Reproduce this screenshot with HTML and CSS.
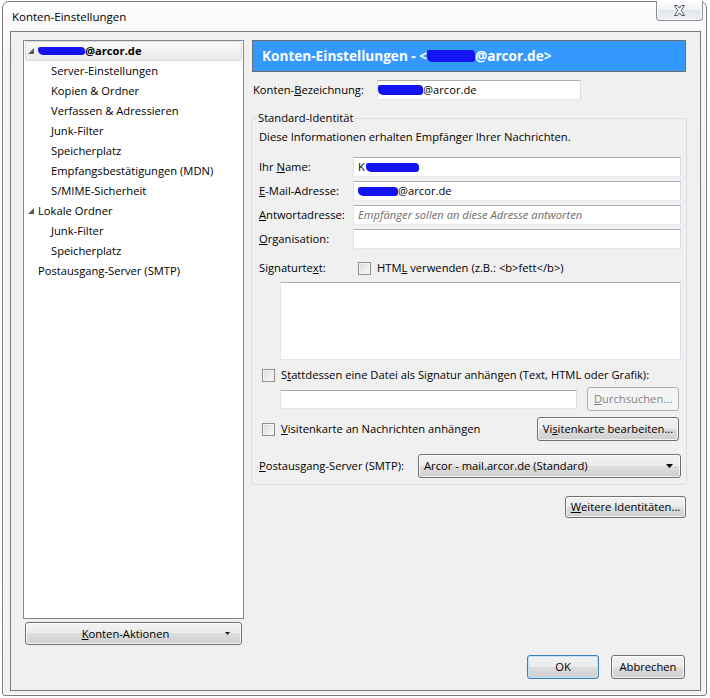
FILE: index.html
```html
<!DOCTYPE html>
<html lang="de">
<head>
    <meta charset="UTF-8">
    <meta name="viewport" content="width=device-width, initial-scale=1.0">
    <title>Konten-Einstellungen</title>
    <link rel="stylesheet" href="styles.css">
</head>
<body>
    <div class="window">
        <div class="titlebar">
            <span class="title">Konten-Einstellungen</span>
            <button class="close" type="button" aria-label="Schließen">
                <svg width="13" height="11" viewBox="0 0 13 11">
                    <polygon points="1.5,0.5 4.5,0.5 6.5,3.2 8.5,0.5 11.5,0.5 8.2,5.5 11.5,10.5 8.5,10.5 6.5,7.8 4.5,10.5 1.5,10.5 4.8,5.5" fill="#fff" stroke="#4d5566" stroke-width="1"/>
                </svg>
            </button>
        </div>

        <div class="client">
            <div class="main">
                <!-- Kontenbaum links -->
                <div class="sidebar">
                    <ul class="tree">
                        <li class="top sel">
                            <svg class="twisty" viewBox="0 0 7 7"><polygon points="6,0 6,6 0,6" fill="#595959"/></svg>
                            <b><span class="redact r-tree"></span>@arcor.de</b>
                        </li>
                        <li class="leaf">Server-Einstellungen</li>
                        <li class="leaf">Kopien &amp; Ordner</li>
                        <li class="leaf">Verfassen &amp; Adressieren</li>
                        <li class="leaf">Junk-Filter</li>
                        <li class="leaf">Speicherplatz</li>
                        <li class="leaf">Empfangsbestätigungen (MDN)</li>
                        <li class="leaf">S/MIME-Sicherheit</li>
                        <li class="top">
                            <svg class="twisty" viewBox="0 0 7 7"><polygon points="6,0 6,6 0,6" fill="#595959"/></svg>
                            Lokale Ordner
                        </li>
                        <li class="leaf">Junk-Filter</li>
                        <li class="leaf">Speicherplatz</li>
                        <li class="plain">Postausgang-Server (SMTP)</li>
                    </ul>
                    <button class="btn actions" type="button">
                        <span class="btn-text"><u>K</u>onten-Aktionen</span>
                        <svg class="mini-arrow" width="5" height="3" viewBox="0 0 5 3"><polygon points="0,0 5,0 2.5,3" fill="#222"/></svg>
                    </button>
                </div>

                <!-- Einstellungen rechts -->
                <div class="panel">
                    <div class="banner">Konten-Einstellungen - &lt;<span class="redact r-banner"></span>@arcor.de&gt;</div>

                    <div class="name-row">
                        <label>Konten-<u>B</u>ezeichnung:</label>
                        <div class="field account"><span class="redact r-account"></span>@arcor.de</div>
                    </div>

                    <fieldset class="identity">
                        <legend>Standard-Identität</legend>
                        <p class="intro">Diese Informationen erhalten Empfänger Ihrer Nachrichten.</p>

                        <div class="row first">
                            <label>Ihr <u>N</u>ame:</label>
                            <div class="field">K<span class="redact r-name"></span></div>
                        </div>
                        <div class="row">
                            <label><u>E</u>-Mail-Adresse:</label>
                            <div class="field"><span class="redact r-mail"></span>@arcor.de</div>
                        </div>
                        <div class="row">
                            <label><u>A</u>ntwortadresse:</label>
                            <div class="field"><span class="placeholder">Empfänger sollen an diese Adresse antworten</span></div>
                        </div>
                        <div class="row">
                            <label><u>O</u>rganisation:</label>
                            <div class="field"></div>
                        </div>

                        <div class="row sig-row">
                            <label>Signaturte<u>x</u>t:</label>
                            <span class="check-label html-check"><span class="check"></span><span>HTM<u>L</u> verwenden (z.B.: &lt;b&gt;fett&lt;/b&gt;)</span></span>
                        </div>
                        <div class="field sigbox"></div>

                        <div class="row attach-row">
                            <span class="check-label"><span class="check"></span><span>S<u>t</u>attdessen eine Datei als Signatur anhängen (Text, HTML oder Grafik):</span></span>
                        </div>
                        <div class="row file-row">
                            <div class="field file"></div>
                            <button class="btn disabled browse" type="button" disabled><u>D</u>urchsuchen...</button>
                        </div>

                        <div class="row card-row">
                            <span class="check-label"><span class="check"></span><span><u>V</u>isitenkarte an Nachrichten anhängen</span></span>
                            <button class="btn card" type="button">Vi<u>s</u>itenkarte bearbeiten...</button>
                        </div>

                        <div class="row smtp-row">
                            <label class="smtp-label"><u>P</u>ostausgang-Server (SMTP):</label>
                            <div class="btn combo">
                                <span>Arcor - mail.arcor.de (Standard)</span>
                                <svg width="7" height="4" viewBox="0 0 7 4"><polygon points="0,0 7,0 3.5,4" fill="#000"/></svg>
                            </div>
                        </div>
                    </fieldset>

                    <button class="btn more" type="button"><u>W</u>eitere Identitäten...</button>
                </div>
            </div>

            <div class="footer">
                <button class="btn default ok" type="button">OK</button>
                <button class="btn cancel" type="button">Abbrechen</button>
            </div>
        </div>
    </div>
</body>
</html>
```

FILE: styles.css
```css
body {
    margin: 0;
    width: 710px;
    height: 698px;
    overflow: hidden;
    background-color: #fff;
    font-family: "Open Sans", "Noto Sans", sans-serif;
    font-size: 11.2px;
    line-height: 16px;
    color: #000;
}
u {
    text-underline-offset: 1px;
}

/* Fensterrahmen */
.window {
    margin: 1px 0 0 2px;
    width: 705px;
    height: 695px;
    box-sizing: border-box;
    border: 1px solid #7b7b7b;
    border-radius: 7px 7px 3px 3px;
    background: linear-gradient(#fdfdfd, #f3f4f6 60px, #eff1f3);
    box-shadow: inset 0 0 0 1px #fff;
    padding: 0 5px 4px 7px;
    display: flex;
    flex-direction: column;
}
.titlebar {
    height: 29px;
    display: flex;
    justify-content: space-between;
    align-items: flex-start;
    margin-right: -2px;
}
.title {
    margin: 7px 0 0 2px;
    font-size: 11.5px;
}
.close {
    width: 47px;
    height: 20px;
    margin-top: -1px;
    padding: 0;
    border: 1px solid #8a8f99;
    border-top: 0;
    border-radius: 0 0 4px 4px;
    background: linear-gradient(#fefefe, #f0f2f4 50%, #e4e7eb 50%, #eef0f2);
    box-shadow: inset 0 0 0 1px rgba(255, 255, 255, 0.8);
    display: flex;
    align-items: center;
    justify-content: center;
}

.client {
    flex: 1;
    border: 1px solid #7a7a7a;
    background-color: #f0f0f0;
    display: flex;
    flex-direction: column;
}
.main {
    display: flex;
    gap: 7px;
    padding: 8px 0 0 12px;
}

/* Baum */
.sidebar {
    width: 221px;
    display: flex;
    flex-direction: column;
    gap: 3px;
}
.tree {
    height: 579px;
    box-sizing: border-box;
    border: 1px solid #828790;
    background-color: #fff;
    margin: 0;
    padding: 0;
    list-style: none;
}
.tree li {
    height: 20px;
    box-sizing: border-box;
    margin: 0 1px;
    display: flex;
    align-items: center;
    white-space: nowrap;
}
.tree .top {
    padding-left: 3px;
}
.tree .sel {
    border: 1px solid #d9d9d9;
    border-radius: 3px;
    background: linear-gradient(#fafafa, #e9e9e9);
    padding-left: 2px;
}
.tree .leaf {
    padding-left: 26px;
}
.tree .plain {
    padding-left: 13px;
}
.twisty {
    width: 7px;
    height: 7px;
    margin-right: 3px;
    flex: none;
}

/* Buttons im Win7-Stil */
.btn {
    font: inherit;
    color: #000;
    height: 24px;
    box-sizing: border-box;
    padding: 0;
    border: 1px solid #707070;
    border-radius: 3px;
    background: linear-gradient(#f2f2f2, #ebebeb 50%, #dddddd 50%, #cfcfcf);
    box-shadow: inset 0 0 0 1px rgba(255, 255, 255, 0.75);
    white-space: nowrap;
}
.btn.disabled {
    border-color: #adb2b5;
    background: #f4f4f4;
    box-shadow: none;
    color: #838383;
}
.btn.default {
    border-color: #3c7fb1;
    box-shadow: inset 0 0 0 1px #bfe3f8;
}
.actions {
    margin: 0 2px;
    height: 23px;
    display: flex;
    align-items: center;
}
.actions .btn-text {
    flex: 1;
    text-align: center;
}
.mini-arrow {
    margin-right: 11px;
}

/* rechte Seite */
.panel {
    width: 436px;
    display: flex;
    flex-direction: column;
}
.banner {
    margin: 0 1px;
    height: 32px;
    box-sizing: border-box;
    border: 1px solid #6f6f6f;
    background-color: #3399ff;
    color: #fff;
    font-weight: bold;
    font-size: 13.6px;
    padding-left: 9px;
    display: flex;
    align-items: center;
    white-space: nowrap;
}
.name-row {
    display: flex;
    align-items: center;
    height: 20px;
    margin-top: 8px;
}
.name-row label {
    width: 124px;
    padding-left: 2px;
}
.field {
    height: 20px;
    box-sizing: border-box;
    border: 1px solid;
    border-color: #abadb3 #dbdfe6 #e3e9ef #e2e3ea;
    background-color: #fff;
    padding: 0 4px;
    display: flex;
    align-items: center;
    white-space: nowrap;
}
.field.account {
    width: 204px;
    padding-left: 0;
}
.placeholder {
    font-style: italic;
    color: #6d6d6d;
}

/* geschwärzte Stellen */
.redact {
    display: inline-block;
    background-color: #1414f2;
    border-radius: 2px 4px 3px 5px;
}
.r-tree {
    width: 47px;
    height: 8px;
}
.r-banner {
    width: 48px;
    height: 12px;
}
.r-account {
    width: 45px;
    height: 10px;
}
.r-name {
    width: 53px;
    height: 9px;
    margin-left: 1px;
}
.r-mail {
    width: 40px;
    height: 9px;
}

/* Standard-Identität */
.identity {
    margin: 10px 0 0;
    padding: 0 5px 6px 7px;
    border: 1px solid #d5dfe5;
    border-radius: 3px;
    min-width: 0;
}
.identity legend {
    padding: 0 2px;
    margin-left: -3px;
    line-height: 16px;
}
.intro {
    margin: 3px 0 0;
}
.row {
    display: flex;
    align-items: center;
    height: 20px;
    margin-top: 4px;
}
.row.first {
    margin-top: 12px;
}
.row label {
    width: 94px;
    flex: none;
}
.row .field {
    flex: 1;
}
.check-label {
    display: flex;
    align-items: center;
    gap: 6px;
    white-space: nowrap;
}
.check {
    width: 13px;
    height: 13px;
    box-sizing: border-box;
    border: 1px solid #8e8f8f;
    background: linear-gradient(135deg, #d6d6d6, #f2f2f2 70%, #fdfdfd);
    box-shadow: inset 0 0 0 1px #f4f4f4;
    flex: none;
}
.sig-row {
    margin-top: 9px;
}
.html-check {
    margin-left: 5px;
}
.field.sigbox {
    height: 78px;
    margin: 4px 0 0 21px;
}
.attach-row {
    height: 18px;
    margin-top: 6px;
}
.attach-row .check-label,
.card-row .check-label {
    margin-left: 3px;
}
.file-row {
    height: 24px;
    margin-top: 3px;
}
.row .field.file {
    flex: none;
    width: 297px;
    height: 19px;
    margin-left: 21px;
}
.browse {
    width: 92px;
    margin-left: 10px;
}
.card-row {
    height: 24px;
    margin-top: 6px;
    justify-content: space-between;
}
.card {
    width: 142px;
    margin-right: 2px;
}
.smtp-row {
    height: 24px;
    margin-top: 13px;
}
.row .smtp-label {
    width: 159px;
}
.combo {
    flex: 1;
    display: flex;
    align-items: center;
    justify-content: space-between;
    padding: 0 7px 0 5px;
}
.more {
    align-self: flex-end;
    width: 121px;
    height: 22px;
    margin: 11px 1px 0 0;
}

/* OK / Abbrechen */
.footer {
    margin-top: auto;
    display: flex;
    justify-content: flex-end;
    gap: 12px;
    padding: 0 15px 11px 0;
}
.ok {
    width: 72px;
}
.cancel {
    width: 74px;
}
```
